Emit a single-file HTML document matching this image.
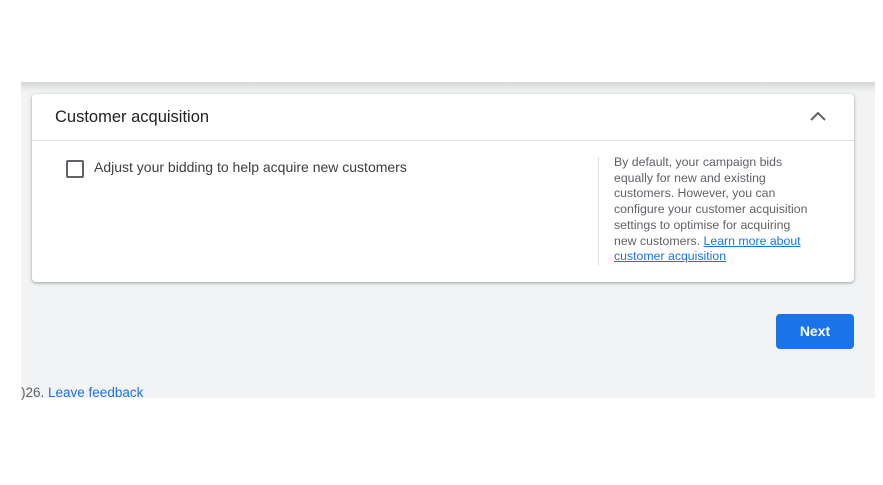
<!DOCTYPE html><html><head><style>
body{margin:0;width:883px;height:485px;background:#fff;position:relative;overflow:hidden;font-family:"Liberation Sans",sans-serif}
.bg{position:absolute;left:21px;top:82px;width:854px;height:316px;background:#f1f3f4;overflow:hidden}
.sh{position:absolute;left:0;top:0;width:854px;height:10px;background:linear-gradient(#d5d7d9,#f1f3f4)}
.card{position:absolute;left:32px;top:94px;width:822px;height:188px;background:#fff;border-radius:4px;box-shadow:0 1px 2px rgba(60,64,67,.3),0 1px 3px 1px rgba(60,64,67,.15)}
.hd{position:absolute;left:0;top:0;width:822px;height:46px;border-bottom:1px solid #e0e0e0}
.t{position:absolute;left:23px;top:14px;font-size:16.5px;color:#202124}
.cb{position:absolute;left:34px;top:66px;width:14px;height:14px;border:2px solid #5f6368;border-radius:2px}
.lb{position:absolute;left:62px;top:65px;font-size:14px;color:#3c4043}
.vd{position:absolute;left:566px;top:63px;width:1px;height:109px;background:#e0e0e0}
.tx{position:absolute;left:582px;top:61px;white-space:nowrap;font-size:12.3px;line-height:15.7px;color:#5f6368}
a{color:#1a73e8;text-decoration:underline}
.btn{position:absolute;left:776px;top:314px;width:78px;height:35px;background:#1a73e8;border-radius:4px;color:#fff;font-size:14px;font-weight:bold;text-align:center;line-height:35px}
.ft{position:absolute;left:21px;top:385px;font-size:13.5px;color:#5f6368}
.ft span{color:#1a73e8}
</style></head><body>
<div class="bg"><div class="sh"></div></div>
<div class="card">
<div class="hd"><div class="t">Customer acquisition</div>
<svg style="position:absolute;left:777px;top:16px" width="18" height="12" viewBox="0 0 18 12"><path d="M2 10 L9 3 L16 10" fill="none" stroke="#5f6368" stroke-width="2"/></svg></div>
<div class="cb"></div>
<div class="lb">Adjust your bidding to help acquire new customers</div>
<div class="vd"></div>
<div class="tx">By default, your campaign bids<br>equally for new and existing<br>customers. However, you can<br>configure your customer acquisition<br>settings to optimise for acquiring<br>new customers. <a>Learn more about</a><br><a>customer acquisition</a></div>
</div>
<div class="btn">Next</div>
<div class="ft">)26. <span>Leave feedback</span></div>
</body></html>
